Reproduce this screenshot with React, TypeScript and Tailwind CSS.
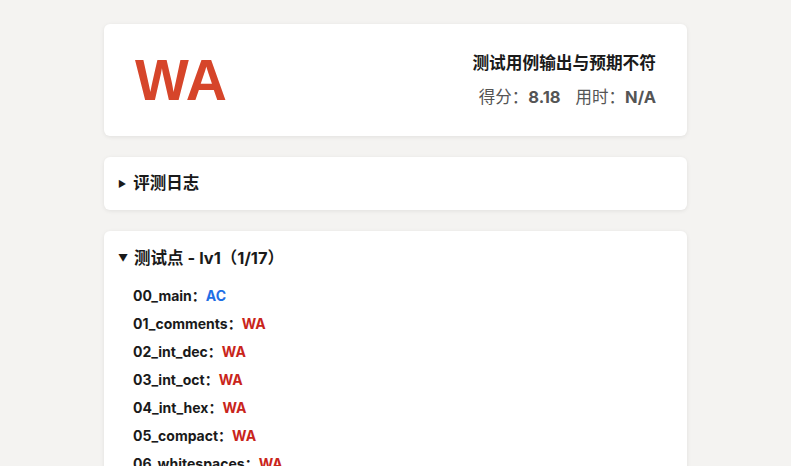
import React from "react";

const items: [string, string][] = [
  ["00_main", "AC"],
  ["01_comments", "WA"],
  ["02_int_dec", "WA"],
  ["03_int_oct", "WA"],
  ["04_int_hex", "WA"],
  ["05_compact", "WA"],
  ["06_whitespaces", "WA"],
  ["07_hex_oct", "WA"],
];

export default function App() {
  return (
    <div
      className="min-h-screen bg-[#f4f3f1] pt-[24px] text-[#1a1a1a]"
      style={{ fontFamily: '"Inter", "Noto Sans CJK SC", sans-serif' }}
    >
      <div className="mx-auto flex w-[583px] flex-col gap-[21px]">
        <div className="flex h-[112px] items-center justify-between rounded-md bg-white pl-[31px] pr-[31px] shadow-[0_1px_4px_rgba(0,0,0,0.08)]">
          <div
            className="text-[57px] font-bold leading-none text-[#d6452a]"
            style={{ fontFamily: '"Liberation Sans", Arial, sans-serif' }}
          >
            WA
          </div>
          <div className="flex flex-col items-end gap-[14px]">
            <div className="text-[16.7px] font-bold leading-[20px]">测试用例输出与预期不符</div>
            <div className="text-[16.5px] leading-[20px] text-[#555]">
              得分：<span className="font-bold">8.18</span>
              <span className="ml-[15px]">用时：</span>
              <span className="font-bold">N/A</span>
            </div>
          </div>
        </div>

        <div className="flex h-[53px] items-center rounded-md bg-white px-[14px] shadow-[0_1px_4px_rgba(0,0,0,0.08)]">
          <span className="mr-[7px] text-[9px]">▶</span>
          <span className="text-[16.5px] font-bold">评测日志</span>
        </div>

        <div className="rounded-md bg-white px-[14px] pt-[16px] pb-[20px] shadow-[0_1px_4px_rgba(0,0,0,0.08)]">
          <div className="flex h-[22px] items-center">
            <span className="mr-[6px] text-[10px]">▼</span>
            <span className="text-[16.5px] font-bold">测试点 - lv1（1/17）</span>
          </div>
          <div className="mt-[12px] flex flex-col pl-[15px]">
            {items.map(([name, res]) => (
              <div key={name} className="flex h-[28px] items-center text-[14px] font-bold">
                <span>{name}：</span>
                <span className={res === "AC" ? "text-[#1f6fe5]" : "text-[#c9251b]"}>{res}</span>
              </div>
            ))}
          </div>
        </div>
      </div>
    </div>
  );
}
